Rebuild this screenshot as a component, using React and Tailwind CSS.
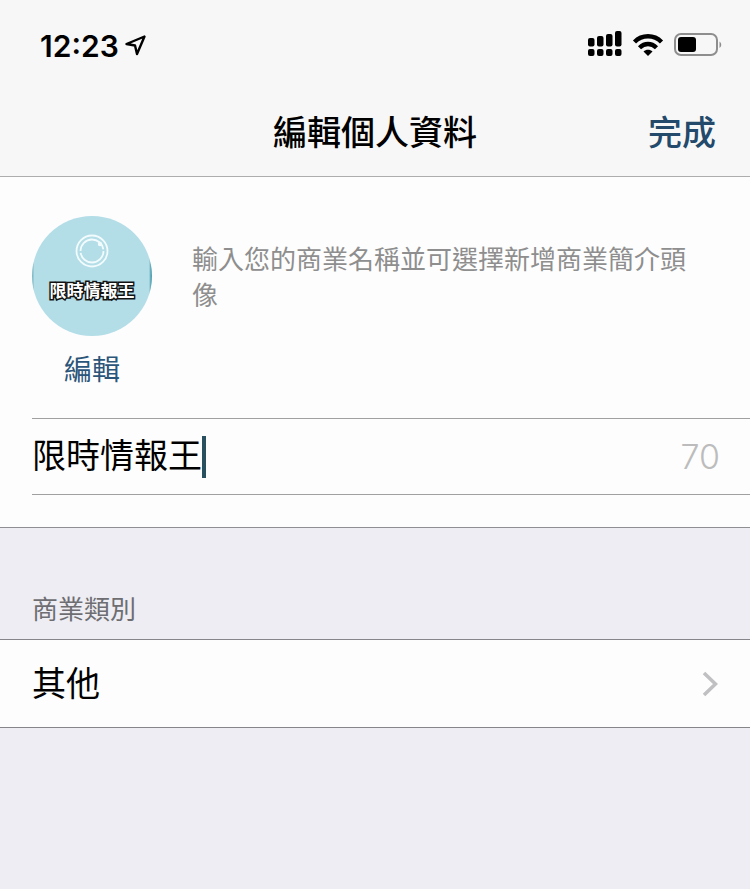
import React, { useState } from "react";

const SignalIcon = () => (
  <svg width="35" height="28" viewBox="0 0 35 28" fill="#000" aria-hidden="true">
    <rect x="1" y="7" width="6.500" height="8.500" rx="2" />
    <rect x="10" y="5" width="6.500" height="10.500" rx="2" />
    <rect x="19" y="3" width="6.500" height="12.500" rx="2" />
    <rect x="28" y="0" width="6.500" height="15.500" rx="2" />
    <rect x="1" y="18" width="6.500" height="7" rx="2" />
    <rect x="10" y="18" width="6.500" height="7" rx="2" />
    <rect x="19" y="18" width="6.500" height="7" rx="2" />
    <rect x="28" y="18" width="6.500" height="7" rx="2" />
  </svg>
);

const WifiIcon = () => (
  <svg width="32" height="24" viewBox="0 0 32 24" fill="none" aria-hidden="true">
    <path d="M2.500 9C10 1.400 22 1.400 29.500 9" stroke="#000" strokeWidth="4.400" />
    <path d="M7.500 14.800C12.600 9.800 19.400 9.800 24.500 14.800" stroke="#000" strokeWidth="4.400" />
    <path d="M11.500 18.500C14 16 18 16 20.500 18.500L16 23Z" fill="#000" />
  </svg>
);

const BatteryIcon = () => (
  <svg width="48" height="24" viewBox="0 0 48 24" fill="none" aria-hidden="true">
    <rect x="1" y="1" width="42" height="21" rx="6" stroke="#8e8e8e" strokeWidth="2" />
    <rect x="4" y="4" width="18" height="15" rx="3" fill="#000" />
    <path d="M45.500 8.500C47.800 10 47.800 13.500 45.500 15Z" fill="#8e8e8e" />
  </svg>
);

const LocationIcon = () => (
  <svg width="24" height="22" viewBox="0 0 24 22" fill="none" aria-hidden="true">
    <path
      d="M21.500 1.500L3.500 9L12 10.500L14 19Z"
      stroke="#000"
      strokeWidth="2.400"
      strokeLinejoin="round"
    />
  </svg>
);

const StatusBar = () => (
  <div className="flex h-22 items-center justify-between pt-1 pr-7 pl-10">
    <div className="flex items-center gap-1">
      <span className="font-['Inter','Liberation_Sans',sans-serif] text-[30px] leading-9 font-semibold">
        12:23
      </span>
      <LocationIcon />
    </div>
    <div className="flex items-center gap-2.5 pb-0.5">
      <SignalIcon />
      <WifiIcon />
      <BatteryIcon />
    </div>
  </div>
);

const Avatar = () => (
  <div className="flex size-30 flex-col items-center overflow-hidden rounded-full bg-[linear-gradient(to_right,#7fb9c6_1px,#b3dde7_2px,#b3dde7_117px,#4f9fb0_119px)] pt-4">
    <svg width="36" height="36" viewBox="0 0 36 36" fill="none" aria-hidden="true">
      <circle cx="18" cy="19" r="15.500" stroke="#f2fbfd" strokeWidth="1.800" />
      <circle
        cx="18"
        cy="19"
        r="11.500"
        stroke="#f2fbfd"
        strokeWidth="1.800"
        strokeDasharray="34 2"
      />
      <circle cx="26" cy="12" r="2.200" fill="#f2fbfd" />
    </svg>
    <span className="mt-2.5 text-[17px] leading-6 font-bold whitespace-nowrap text-white [paint-order:stroke_fill] [-webkit-text-stroke:3px_#111]">
      限時情報王
    </span>
  </div>
);

const App = () => {
  const [name, setName] = useState("限時情報王");

  return (
    <div className="min-h-screen bg-[#ededf3] font-['Noto_Sans_CJK_TC',sans-serif] text-black">
      <header className="border-b border-[#adadad] bg-[#f7f7f7]">
        <StatusBar />
        <div className="grid h-22 grid-cols-[1fr_auto_1fr] items-center px-[34px] pb-0.5">
          <h1 className="col-start-2 text-[34px] leading-12 font-medium">編輯個人資料</h1>
          <button
            type="button"
            className="justify-self-end text-[34px] leading-12 font-medium text-[#23496b]"
          >
            完成
          </button>
        </div>
      </header>

      <main>
        <section className="border-b border-[#8e8e93] bg-[#fdfdfd] pb-8 pl-8">
          <div className="flex items-start gap-10 pt-[39px] pb-[30px]">
            <div className="flex shrink-0 flex-col items-center gap-3">
              <Avatar />
              <button type="button" className="text-[28px] leading-10 text-[#2c557a]">
                編輯
              </button>
            </div>
            <p className="flex-1 pt-6 pr-11 text-[26px] leading-9 text-[#8e8e8e]">
              輸入您的商業名稱並可選擇新增商業簡介頭像
            </p>
          </div>
          <div className="flex h-[77px] items-center border-y border-[#a0a0a0] pr-[30px]">
            <input
              type="text"
              aria-label="商業名稱"
              value={name}
              onChange={(e) => setName(e.target.value)}
              className="field-sizing-content max-w-4/5 pb-1.5 text-[34px] leading-12 caret-transparent outline-none"
            />
            <span className="h-[42px] w-1 bg-[#28505f]" />
            <span className="ml-auto font-['Inter','Liberation_Sans',sans-serif] text-[34px] leading-12 font-light text-[#bcbcbc]">
              70
            </span>
          </div>
        </section>

        <section>
          <h2 className="px-8 pt-15 pb-3 text-[26px] leading-[39px] text-[#6d6d72]">商業類別</h2>
          <button
            type="button"
            className="flex h-[89px] w-full items-center justify-between border-y border-[#85858a] bg-[#fdfdfd] pr-8 pl-8 text-left"
          >
            <span className="pb-1 text-[34px] leading-12">其他</span>
            <svg width="16" height="26" viewBox="0 0 16 26" fill="none" aria-hidden="true">
              <path d="M2 2L13.500 13L2 24" stroke="#c0c0c2" strokeWidth="3.600" />
            </svg>
          </button>
        </section>
      </main>
    </div>
  );
};

export default App;
